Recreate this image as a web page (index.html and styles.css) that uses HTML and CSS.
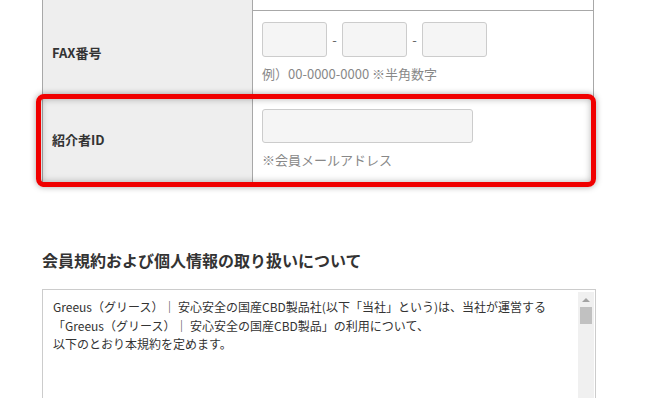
FILE: index.html
```html
<!DOCTYPE html>
<html lang="ja">

<head>
    <meta charset="UTF-8" />
    <meta name="viewport" content="width=device-width, initial-scale=1.0" />
    <title>会員登録 | Greeus</title>
    <link rel="stylesheet" href="styles.css">
</head>

<body>

    <div class="entry">
        <div class="form-table">
            <!-- tail of the row above (scrolled out of view) -->
            <div class="form-row row-tail">
                <div class="form-label"></div>
                <div class="form-field"></div>
            </div>

            <div class="form-row">
                <div class="form-label">FAX番号</div>
                <div class="form-field">
                    <div class="tel-group">
                        <input type="text" class="input tel" />
                        <span class="sep">-</span>
                        <input type="text" class="input tel" />
                        <span class="sep">-</span>
                        <input type="text" class="input tel" />
                    </div>
                    <p class="note">例）00-0000-0000 ※半角数字</p>
                </div>
            </div>

            <div class="form-row highlight">
                <div class="form-label">紹介者ID</div>
                <div class="form-field">
                    <input type="text" class="input wide" />
                    <p class="note">※会員メールアドレス</p>
                </div>
            </div>
        </div>

        <h3 class="terms-title">会員規約および個人情報の取り扱いについて</h3>

        <div class="terms-box">
            <div class="terms-text">
                <p>Greeus（グリース）｜ 安心安全の国産CBD製品社(以下「当社」という)は、当社が運営する<br>
                「Greeus（グリース）｜ 安心安全の国産CBD製品」の利用について、<br>
                以下のとおり本規約を定めます。</p>
            </div>
            <div class="scrollbar">
                <span class="scroll-up"></span>
                <span class="scroll-thumb"></span>
            </div>
        </div>
    </div>

</body>

</html>
```

FILE: styles.css
```css
* {
    box-sizing: border-box;
}

body {
    font-family: 'Noto Sans CJK JP', 'Noto Sans', sans-serif;
    background-color: #fff;
    color: #333;
    margin: 0;
    padding: 0;
    height: 398px;
    overflow: hidden;
}

.entry {
    width: 554px;
    margin-left: 42px;
}

/* form table */
.form-table {
    border-left: 1px solid #a8a8a8;
    border-right: 1px solid #a8a8a8;
    border-bottom: 1px solid #a8a8a8;
    width: 552px;
}

.form-row {
    display: grid;
    grid-template-columns: 210px 1fr;
    border-top: 1px solid #a8a8a8;
    height: 87px;
}

.form-row.row-tail {
    border-top: none;
    height: 10px;
}

.form-label {
    background-color: #eeeeee;
    border-right: 1px solid #a8a8a8;
    display: flex;
    align-items: center;
    padding: 0 0 3px 9px;
    font-size: 13px;
    font-weight: 700;
    color: #333;
}

.form-field {
    padding: 11px 0 0 9px;
}

.tel-group {
    display: flex;
    align-items: center;
}

.input {
    display: block;
    height: 35px;
    background-color: #f5f5f5;
    border: 1px solid #ccc;
    border-radius: 3px;
    font-size: 14px;
}

.tel {
    width: 65px;
}

.wide {
    width: 211px;
    height: 34px;
}

.sep {
    width: 15px;
    text-align: center;
    font-size: 13px;
    color: #666;
}

.note {
    margin: 7px 0 0;
    font-size: 13px;
    color: #888;
    line-height: 20px;
}

.note-wide {
    letter-spacing: 0.3px;
}

/* annotation around referrer row */
.highlight {
    position: relative;
    height: 86px;
}

.highlight::after {
    content: "";
    position: absolute;
    top: -4px;
    bottom: -4px;
    left: -7px;
    right: -3px;
    border: 5px solid #f00000;
    border-radius: 8px;
    box-shadow: 0 0 6px rgba(0, 0, 0, 0.35), inset 0 0 7px rgba(0, 0, 0, 0.3);
    pointer-events: none;
}

/* terms */
.terms-title {
    margin: 64px 0 0;
    font-size: 16px;
    font-weight: 700;
    color: #333;
    line-height: 24px;
}

.terms-box {
    position: relative;
    margin-top: 17px;
    width: 554px;
    height: 160px;
    border: 1px solid #ccc;
    overflow: hidden;
}

.terms-text {
    padding: 8px 30px 0 10px;
    font-size: 12px;
    line-height: 18.5px;
    color: #333;
}

.terms-text p {
    margin: 0;
    white-space: nowrap;
}

.scrollbar {
    position: absolute;
    top: 2px;
    right: 1px;
    bottom: 0;
    width: 16px;
    background-color: #f0f0f0;
}

.scroll-up {
    display: block;
    width: 0;
    height: 0;
    margin: 6px auto 0;
    border-left: 4px solid transparent;
    border-right: 4px solid transparent;
    border-bottom: 4px solid #a3a3a3;
}

.scroll-thumb {
    display: block;
    width: 12px;
    height: 17px;
    margin: 5px auto 0;
    background-color: #c1c1c1;
}
```
